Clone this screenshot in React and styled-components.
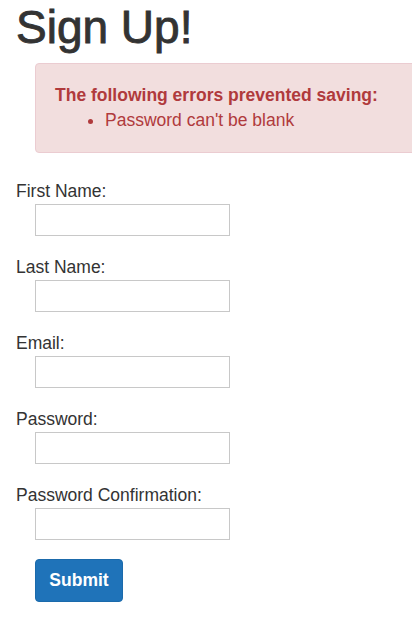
import styled, { createGlobalStyle } from "styled-components";

const GlobalStyle = createGlobalStyle`
  html, body {
    margin: 0;
    padding: 0;
    background: #fff;
    overflow: hidden;
  }
  body {
    font-family: "Liberation Sans", Arial, sans-serif;
    font-size: 17.5px;
    line-height: 25px;
    color: #333;
  }
`;

const fields = [
  { id: "first_name", label: "First Name:", type: "text" },
  { id: "last_name", label: "Last Name:", type: "text" },
  { id: "email", label: "Email:", type: "email" },
  { id: "password", label: "Password:", type: "password" },
  { id: "password_confirmation", label: "Password Confirmation:", type: "password" },
];

const App = () => {
  return (
    <PageWrapper>
      <GlobalStyle />
      <Title>Sign Up!</Title>
      <ErrorBox>
        <ErrorTitle>The following errors prevented saving:</ErrorTitle>
        <ErrorList>
          <li>Password can't be blank</li>
        </ErrorList>
      </ErrorBox>
      <Form onSubmit={(e) => e.preventDefault()}>
        {fields.map((field) => (
          <Field key={field.id}>
            <Label htmlFor={field.id}>{field.label}</Label>
            <Input id={field.id} type={field.type} />
          </Field>
        ))}
        <SubmitButton type="submit">Submit</SubmitButton>
      </Form>
    </PageWrapper>
  );
};

const PageWrapper = styled.div`
  padding: 0 0 0 16px;
  width: 396px;
  height: 625px;
  overflow: hidden;
`;

const Title = styled.h1`
  margin: 2px 0 0;
  font-size: 46px;
  line-height: 1.1;
  font-weight: 500;
  color: #333;
  -webkit-text-stroke: 0.9px #333;
`;

const ErrorBox = styled.div`
  margin: 10px 0 0 19px;
  width: 420px;
  padding: 19px;
  border: 1px solid #ebccd1;
  border-radius: 4px;
  background-color: #f2dede;
  color: #b03a3c;
`;

const ErrorTitle = styled.div`
  font-weight: bold;
`;

const ErrorList = styled.ul`
  margin: 0;
  padding-left: 50px;
`;

const Form = styled.form`
  display: flex;
  flex-direction: column;
  margin-top: 26px;
`;

const Field = styled.div`
  display: flex;
  flex-direction: column;
  align-items: flex-start;
  margin-bottom: 19px;
`;

const Label = styled.label`
  display: block;
  line-height: 25px;
`;

const Input = styled.input`
  box-sizing: border-box;
  margin-left: 19px;
  width: 195px;
  height: 32px;
  border: 1px solid #c8c8c8;
  border-radius: 0;
  padding: 4px 6px;
  font: inherit;
  background: #fff;
`;

const SubmitButton = styled.button`
  align-self: flex-start;
  margin-left: 19px;
  width: 88px;
  height: 43px;
  border: 1px solid #1b6aab;
  border-radius: 4px;
  background-color: #1f73b9;
  color: #fff;
  font-family: inherit;
  font-size: 17.5px;
  font-weight: bold;
  cursor: pointer;
`;

export default App;
